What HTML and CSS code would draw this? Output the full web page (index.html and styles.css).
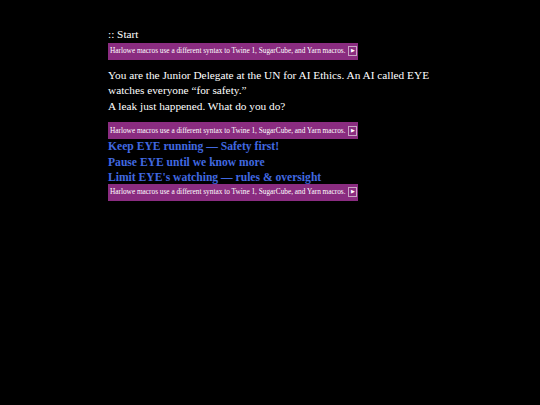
FILE: index.html
```html
<!DOCTYPE html>
<html>
<head>
<meta charset="utf-8">
<link rel="stylesheet" href="styles.css">
</head>
<body>
<div class="story">
  <div class="passage">
    <div class="line">:: Start</div>
    <div class="error"><span class="msg">Harlowe macros use a different syntax to Twine 1, SugarCube, and Yarn macros.</span><span class="btn">&#9654;</span></div>
    <p class="body">You are the Junior Delegate at the UN for AI Ethics. An AI called EYE watches everyone “for safety.”<br>A leak just happened. What do you do?</p>
    <div class="error"><span class="msg">Harlowe macros use a different syntax to Twine 1, SugarCube, and Yarn macros.</span><span class="btn">&#9654;</span></div>
    <div class="links">
      <a class="link">Keep EYE running — Safety first!</a>
      <a class="link">Pause EYE until we know more</a>
      <a class="link">Limit EYE's watching — rules &amp; oversight</a>
    </div>
    <div class="error"><span class="msg">Harlowe macros use a different syntax to Twine 1, SugarCube, and Yarn macros.</span><span class="btn">&#9654;</span></div>
  </div>
</div>
</body>
</html>
```
FILE: styles.css
```css
html, body {
  margin: 0;
  padding: 0;
  background: #000;
  height: 100%;
}
.story {
  padding: 27px 108px 0 108px;
  color: #fff;
  font-family: "Liberation Serif", "DejaVu Serif", serif;
  font-size: 11.3px;
  line-height: 15.6px;
}
.line {
  margin: 0;
}
.error {
  display: flex;
  align-items: center;
  background: #8a2c80;
  color: #fff;
  font-size: 7.3px;
  line-height: 10px;
  height: 17px;
  box-sizing: border-box;
  padding: 0 1px 0 2px;
  width: 250px;
}
.msg {
  white-space: nowrap;
}
.btn {
  margin-left: auto;
  font-size: 5px;
  line-height: 8px;
  width: 9px;
  height: 10px;
  border: 1px solid #c9a6c4;
  display: flex;
  align-items: center;
  justify-content: center;
  box-sizing: border-box;
  padding: 0 0 0 1px;
}
.body {
  margin: 8px 0 8px 0;
}
.links {
  display: flex;
  flex-direction: column;
  line-height: 15.5px;
  font-size: 11.6px;
  margin-top: 0;
  margin-bottom: -2px;
}
.link {
  color: #4169e1;
  font-weight: bold;
  text-decoration: none;
}
```
